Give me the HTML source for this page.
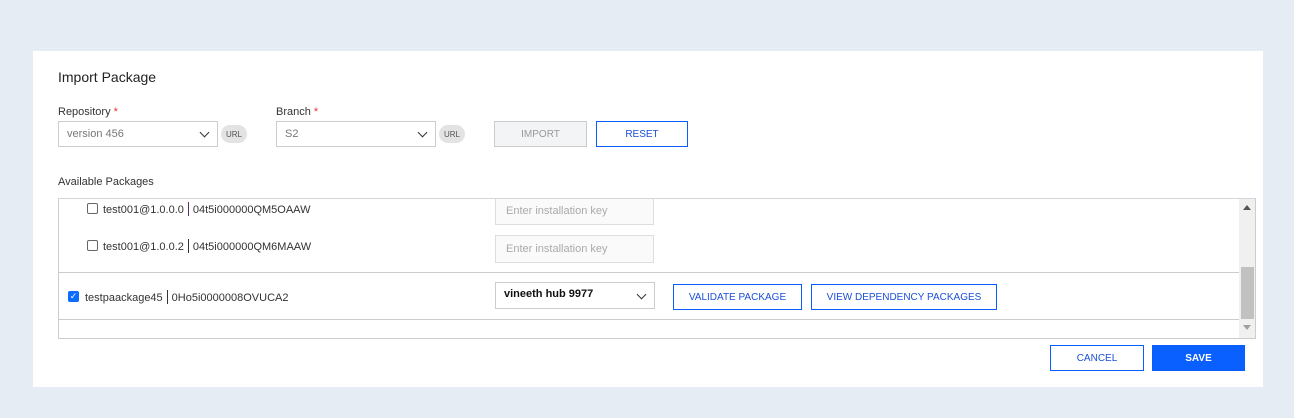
<!DOCTYPE html>
<html><head><style>
*{box-sizing:border-box;margin:0;padding:0}
body{width:1294px;height:418px;background:#e6ecf3;font-family:"Liberation Sans",sans-serif;position:relative;overflow:hidden;color:#222}
.a{position:absolute}
.card{left:33px;top:51px;width:1230px;height:336px;background:#fff}
.lbl{font-size:11px;color:#333}
.req{color:#e33}
.sel{border:1px solid #ccc;height:26px;font-size:11px;color:#777;padding:6px 8px;background:#fff}
.chev{position:absolute;right:9px;top:7px;width:7px;height:7px;border-right:1.3px solid #333;border-bottom:1.3px solid #333;transform:rotate(45deg)}
.url{width:26px;height:18px;border-radius:9px;background:#e3e3e3;font-size:8px;color:#555;display:flex;align-items:center;justify-content:center}
.btn{height:26px;font-size:10px;display:flex;align-items:center;justify-content:center;border:1px solid #0b5cff;color:#1a4fd8;background:#fff}
.txt{font-size:11px;color:#333;white-space:nowrap}
.cb{width:11px;height:11px;border:1px solid #666;border-radius:2px;background:#fff}
.inp{border:1px solid #ddd;background:#fafafa;font-size:11px;color:#aaa;padding:7px 10px;width:159px;height:28px}
.bar{display:inline-block;width:1px;height:14px;background:#333;vertical-align:-3px;margin:0 4px}
</style></head><body>
<div class="a card"></div>
<div class="a" style="left:58px;top:69px;font-size:14px;color:#222">Import Package</div>
<div class="a lbl" style="left:58px;top:106px">Repository <span class="req">*</span></div>
<div class="a sel" style="left:58px;top:121px;width:160px">version 456<span class="chev"></span></div>
<div class="a url" style="left:221px;top:125px">URL</div>
<div class="a lbl" style="left:276px;top:106px">Branch <span class="req">*</span></div>
<div class="a sel" style="left:276px;top:121px;width:160px">S2<span class="chev"></span></div>
<div class="a url" style="left:439px;top:125px">URL</div>
<div class="a btn" style="left:494px;top:121px;width:93px;background:#f3f4f6;border-color:#ccc;color:#999">IMPORT</div>
<div class="a btn" style="left:596px;top:121px;width:92px">RESET</div>
<div class="a lbl" style="left:58px;top:176px">Available Packages</div>
<div class="a" style="left:58px;top:198px;width:1198px;height:141px;border:1px solid #ccc;border-top-color:#d5d5dc;overflow:hidden">
  <div class="a cb" style="left:28px;top:4px"></div>
  <div class="a txt" style="left:44px;top:3px">test001@1.0.0.0<span class="bar" style="background:#5a2a6a"></span>04t5i000000QM5OAAW</div>
  <div class="a inp" style="left:436px;top:-2px">Enter installation key</div>
  <div class="a cb" style="left:28px;top:41px"></div>
  <div class="a txt" style="left:44px;top:40px">test001@1.0.0.2<span class="bar"></span>04t5i000000QM6MAAW</div>
  <div class="a inp" style="left:436px;top:36px">Enter installation key</div>
  <div class="a" style="left:0;top:73px;width:1180px;height:1px;background:#ccc"></div>
  <div class="a" style="left:9px;top:92px;width:11px;height:11px;border-radius:2px;background:#0b6cff;color:#fff;font-size:9px;line-height:11px;text-align:center">✓</div>
  <div class="a txt" style="left:26px;top:91px">testpaackage45<span class="bar"></span>0Ho5i0000008OVUCA2</div>
  <div class="a sel" style="left:436px;top:83px;width:160px;height:27px;color:#111;font-weight:bold;padding-top:5px">vineeth hub 9977<span class="chev" style="top:8px"></span></div>
  <div class="a btn" style="left:614px;top:85px;width:129px">VALIDATE PACKAGE</div>
  <div class="a btn" style="left:752px;top:85px;width:186px">VIEW DEPENDENCY PACKAGES</div>
  <div class="a" style="left:0;top:120px;width:1180px;height:1px;background:#ccc"></div>
  <div class="a" style="left:1180px;top:0;width:17px;height:141px;background:#f0f0f0"></div>
  <div class="a" style="left:1182px;top:68px;width:13px;height:52px;background:#c1c1c1"></div>
  <div class="a" style="left:1184px;top:6px;width:0;height:0;border-left:4px solid transparent;border-right:4px solid transparent;border-bottom:5px solid #555"></div>
  <div class="a" style="left:1184px;top:126px;width:0;height:0;border-left:4px solid transparent;border-right:4px solid transparent;border-top:5px solid #a0a0a0"></div>
</div>
<div class="a btn" style="left:1050px;top:345px;width:94px">CANCEL</div>
<div class="a btn" style="left:1152px;top:345px;width:93px;background:#0a5fff;color:#fff;font-weight:bold">SAVE</div>
</body></html>
